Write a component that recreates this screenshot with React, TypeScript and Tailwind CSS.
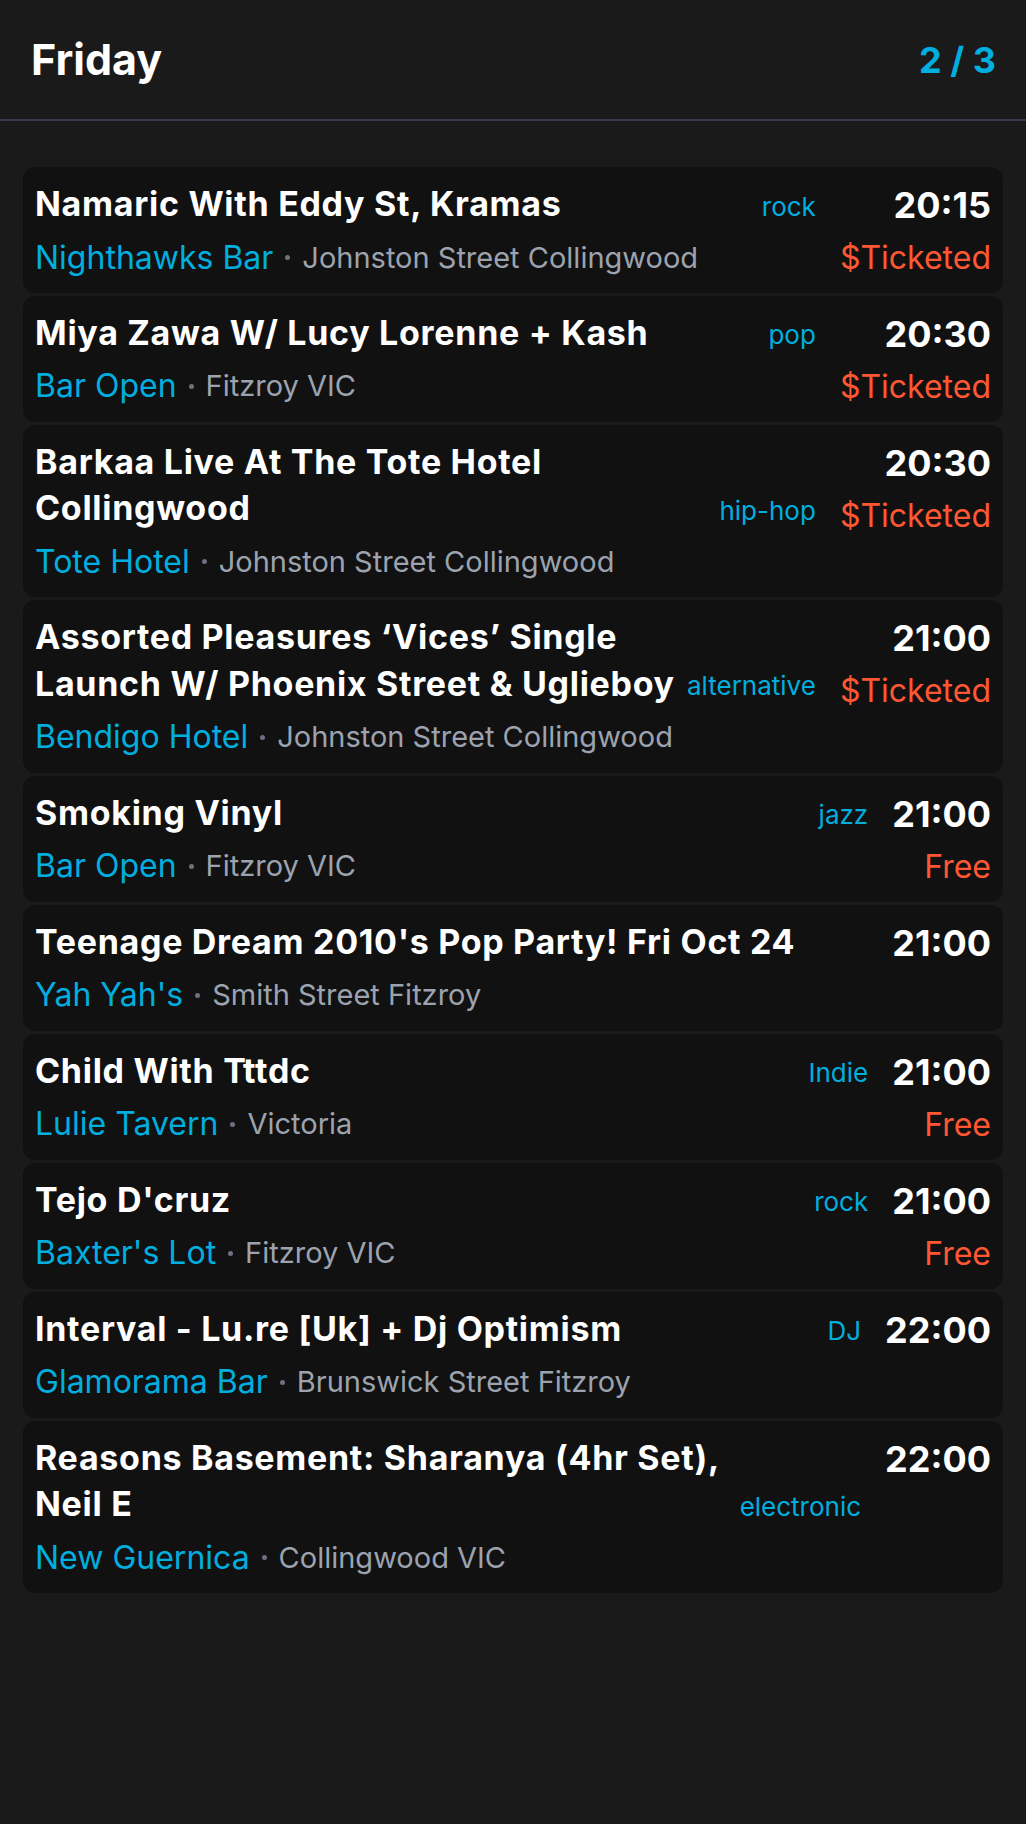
type Gig = {
  title: string;
  genre?: string;
  time: string;
  price?: string;
  venue: string;
  place: string;
};

const gigs: Gig[] = [
  { title: "Namaric With Eddy St, Kramas", genre: "rock", time: "20:15", price: "$Ticketed", venue: "Nighthawks Bar", place: "Johnston Street Collingwood" },
  { title: "Miya Zawa W/ Lucy Lorenne + Kash", genre: "pop", time: "20:30", price: "$Ticketed", venue: "Bar Open", place: "Fitzroy VIC" },
  { title: "Barkaa Live At The Tote Hotel Collingwood", genre: "hip-hop", time: "20:30", price: "$Ticketed", venue: "Tote Hotel", place: "Johnston Street Collingwood" },
  { title: "Assorted Pleasures \u2018Vices\u2019 Single Launch W/ Phoenix Street & Uglieboy", genre: "alternative", time: "21:00", price: "$Ticketed", venue: "Bendigo Hotel", place: "Johnston Street Collingwood" },
  { title: "Smoking Vinyl", genre: "jazz", time: "21:00", price: "Free", venue: "Bar Open", place: "Fitzroy VIC" },
  { title: "Teenage Dream 2010's Pop Party! Fri Oct 24", time: "21:00", venue: "Yah Yah's", place: "Smith Street Fitzroy" },
  { title: "Child With Tttdc", genre: "Indie", time: "21:00", price: "Free", venue: "Lulie Tavern", place: "Victoria" },
  { title: "Tejo D'cruz", genre: "rock", time: "21:00", price: "Free", venue: "Baxter's Lot", place: "Fitzroy VIC" },
  { title: "Interval - Lu.re [Uk] + Dj Optimism", genre: "DJ", time: "22:00", venue: "Glamorama Bar", place: "Brunswick Street Fitzroy" },
  { title: "Reasons Basement: Sharanya (4hr Set), Neil E", genre: "electronic", time: "22:00", venue: "New Guernica", place: "Collingwood VIC" },
];

const GigCard = ({ gig }: { gig: Gig }) => {
  return (
    <div className="flex rounded-[12px] bg-[#111111] pl-[12px] pr-[12px] pt-[14px] pb-[14.3px]">
      {/* left: title + venue */}
      <div className="flex min-w-0 flex-1 flex-col">
        <div className="flex items-end">
          <h2 className="flex-1 text-[34px] leading-[46.5px] font-bold tracking-[0.7px] text-white">{gig.title}</h2>
          {gig.genre && (
            <span className="ml-[12px] text-[26px] leading-[42px] text-[#00aedf]">{gig.genre}</span>
          )}
        </div>
        <div className="mt-[9px] flex items-center leading-[42px]">
          <span className="text-[32px] text-[#00aedf]">{gig.venue}</span>
          <span className="mx-[12px] h-[5px] w-[5px] rounded-full bg-[#6b7280]"></span>
          <span className="text-[29px] text-[#9ca3af]">{gig.place}</span>
        </div>
      </div>

      {/* right: time + price */}
      <div className="ml-[24px] flex flex-col items-end">
        <span className="text-[36px] leading-[48px] font-bold text-white">{gig.time}</span>
        {gig.price && (
          <span className="mt-[9px] text-[32px] leading-[40px] text-[#ff5733]">{gig.price}</span>
        )}
      </div>
    </div>
  );
};

export default function App() {
  return (
    <div className="min-h-screen bg-[#1a1a1a] font-['Inter',sans-serif]">
      {/* Header */}
      <div className="flex h-[121px] items-center justify-between border-b-2 border-[#363c48] pl-[31px] pr-[30px]">
        <h1 className="text-[43px] font-bold text-white">Friday</h1>
        <span className="text-[36px] font-bold text-[#00aedf]">2 / 3</span>
      </div>

      {/* List */}
      <div className="flex flex-col gap-[3.2px] px-[23px] pt-[46px]">
        {gigs.map((g, i) => (
          <GigCard key={i} gig={g} />
        ))}
      </div>
    </div>
  );
}
